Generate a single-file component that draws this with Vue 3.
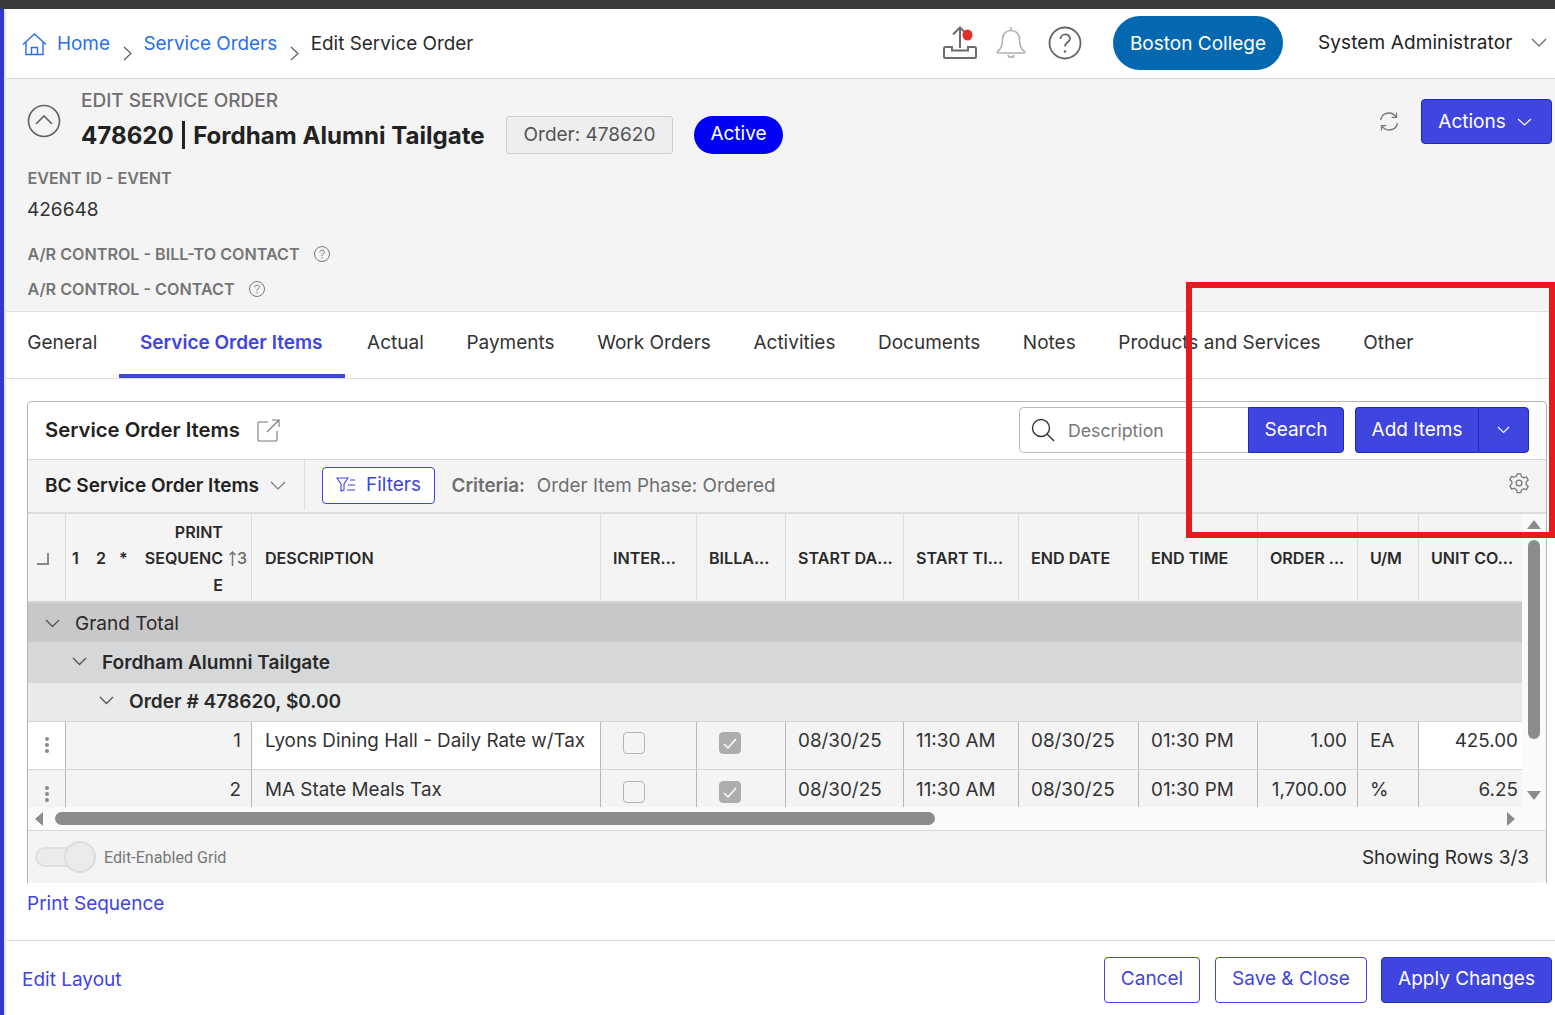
<script setup>
const tabs = ['General', 'Service Order Items', 'Actual', 'Payments', 'Work Orders', 'Activities', 'Documents', 'Notes', 'Products and Services', 'Other']

const headers = ['INTER...', 'BILLA...', 'START DA...', 'START TI...', 'END DATE', 'END TIME', 'ORDER ...', 'U/M', 'UNIT CO...']

const rows = [
  { seq: 1, desc: 'Lyons Dining Hall - Daily Rate w/Tax', start: '08/30/25', startTime: '11:30 AM', end: '08/30/25', endTime: '01:30 PM', qty: '1.00', um: 'EA', cost: '425.00' },
  { seq: 2, desc: 'MA State Meals Tax', start: '08/30/25', startTime: '11:30 AM', end: '08/30/25', endTime: '01:30 PM', qty: '1,700.00', um: '%', cost: '6.25' },
]
</script>

<template>
  <div class="page">
    <div class="topstrip"></div>
    <div class="shell">
      <header class="appbar">
        <nav class="crumbs">
          <svg class="home" width="25" height="23" viewBox="0 0 25 23" fill="none" stroke="#2b6fe8" stroke-width="1.4"><path d="M1 11.5 12.5 1 24 11.5M4 9v12.5h17V9M9.500 21.500v-7h6v7"/></svg>
          <a class="crumb-link">Home</a>
          <svg class="crumb-sep" width="9" height="15" viewBox="0 0 9 15" fill="none" stroke="#555" stroke-width="1.1"><path d="m1 1 7 6.500-7 6.500"/></svg>
          <a class="crumb-link">Service Orders</a>
          <svg class="crumb-sep" width="9" height="15" viewBox="0 0 9 15" fill="none" stroke="#555" stroke-width="1.1"><path d="m1 1 7 6.500-7 6.500"/></svg>
          <span class="crumb-cur">Edit Service Order</span>
        </nav>
        <div class="appbar-right">
          <svg class="ico-upload" width="34" height="33" viewBox="0 0 34 33" fill="none" stroke="#6d6d6d" stroke-width="2"><path d="M17 22V2M10 8.500 17 1.500l6 6M9 21H2.500A1.500 1.500 0 0 0 1 22.500v8A1.500 1.500 0 0 0 2.500 32h29a1.500 1.500 0 0 0 1.500-1.500v-8a1.500 1.500 0 0 0-1.500-1.500H25v3.500H9z"/><ellipse cx="24.500" cy="9" rx="5" ry="5.500" fill="#e0302a" stroke="none"/></svg>
          <svg class="ico-bell" width="30" height="33" viewBox="0 0 30 33" fill="none" stroke="#b3b3b3" stroke-width="1.600"><path d="M15 1v3.500M15 4.500c-5.500 0-8.500 4-8.500 9 0 6-1 9-4.500 11.500-1.300 1-1 2 .5 2h25c1.500 0 1.800-1 .5-2-3.500-2.500-4.500-5.500-4.500-11.500 0-5-3-9-8.500-9zM12 29c.5 3 5.500 3 6 0"/></svg>
          <svg class="ico-help" width="34" height="34" viewBox="0 0 34 34" fill="none" stroke="#666" stroke-width="1.800"><circle cx="17" cy="17" r="15.500"/><path d="M12.500 13c0-6 9.500-6 9.500-.5 0 3.800-5 3.800-5 8"/><circle cx="17" cy="25.500" r="1.200" fill="#666" stroke="none"/></svg>
          <div class="org-pill">Boston College</div>
          <div class="user">System Administrator</div>
          <svg class="user-caret" width="16" height="9" viewBox="0 0 16 9" fill="none" stroke="#666" stroke-width="1.200"><path d="m1 1 7 7 7-7"/></svg>
        </div>
      </header>

      <section class="order-head">
        <div class="order-top">
          <svg class="collapse" width="34" height="34" viewBox="0 0 34 34" fill="none" stroke="#666" stroke-width="1.700"><circle cx="17" cy="17" r="15.500"/><path d="m9 20 8-8 8 8"/></svg>
          <div class="order-titles">
            <div class="eyebrow">EDIT SERVICE ORDER</div>
            <div class="title-row">
              <h1>478620 <span class="pipe"></span> Fordham Alumni Tailgate</h1>
              <div class="badge-order">Order: 478620</div>
              <div class="badge-active">Active</div>
            </div>
          </div>
          <svg class="refresh" width="20" height="21" viewBox="0 0 20 21" fill="none" stroke="#777" stroke-width="1.300"><path d="M1.500 9C2.500 4.500 6 2 10 2c3 0 5.500 1.500 7 4M17.500 1.500V6.300h-4.800M18.500 12c-1 4.500-4.500 7-8.500 7-3 0-5.500-1.500-7-4M2.500 19.500v-4.800h4.800"/></svg>
          <button class="btn primary actions">Actions
            <svg width="15" height="8" viewBox="0 0 15 8" fill="none" stroke="#fff" stroke-width="1.200"><path d="m1 1 6.500 6L14 1"/></svg>
          </button>
        </div>
        <div class="field-label field-event">EVENT ID - EVENT</div>
        <div class="field-value">426648</div>
        <div class="field-label field-bill">A/R CONTROL - BILL-TO CONTACT
          <svg width="16" height="16" viewBox="0 0 16 16" fill="none" stroke="#777" stroke-width="1"><circle cx="8" cy="8" r="7.500"/><path d="M5.800 6.300c0-2.800 4.500-2.800 4.500-.1 0 1.800-2.300 1.700-2.300 3.700"/><circle cx="8" cy="11.800" r=".7" fill="#777" stroke="none"/></svg>
        </div>
        <div class="field-label field-contact">A/R CONTROL - CONTACT
          <svg width="16" height="16" viewBox="0 0 16 16" fill="none" stroke="#777" stroke-width="1"><circle cx="8" cy="8" r="7.500"/><path d="M5.800 6.300c0-2.800 4.500-2.800 4.500-.1 0 1.800-2.300 1.700-2.300 3.700"/><circle cx="8" cy="11.800" r=".7" fill="#777" stroke="none"/></svg>
        </div>
      </section>

      <div class="tabs">
        <div v-for="t in tabs" :key="t" class="tab" :class="{ active: t === 'Service Order Items' }">{{ t }}</div>
      </div>

      <section class="panel">
        <div class="panel-head">
          <h2>Service Order Items</h2>
          <svg class="ext" width="23" height="23" viewBox="0 0 23 23" fill="none" stroke="#777" stroke-width="1.100"><path d="M11 3H2a1.500 1.500 0 0 0-1 1v17a1 1 0 0 0 1 1h17a1 1 0 0 0 1-1v-9M10 13 22 1M15 1h7v7"/></svg>
          <div class="search">
            <svg width="24" height="24" viewBox="0 0 24 24" fill="none" stroke="#333" stroke-width="1.400"><circle cx="10" cy="10" r="8.500"/><path d="m16 16 7 7"/></svg>
            <span>Description</span>
          </div>
          <button class="btn primary search-btn">Search</button>
          <div class="split">
            <button class="btn primary split-main">Add Items</button>
            <button class="btn primary split-caret">
              <svg width="13" height="8" viewBox="0 0 13 8" fill="none" stroke="#fff" stroke-width="1.100"><path d="m1 1 5.500 5.500L12 1"/></svg>
            </button>
          </div>
        </div>

        <div class="toolbar">
          <div class="view-name">BC Service Order Items
            <svg width="16" height="9" viewBox="0 0 16 9" fill="none" stroke="#777" stroke-width="1.100"><path d="m1 1 7 7 7-7"/></svg>
          </div>
          <button class="filters">
            <svg width="20" height="15" viewBox="0 0 20 15" fill="none" stroke="#3f43e0" stroke-width="1.100"><path d="M1 1h11L8 7v6l-3 1V7zM14 3h5M12 8h7M11 13h8"/></svg>
            Filters
          </button>
          <div class="criteria"><b>Criteria:</b> Order Item Phase: Ordered</div>
          <svg class="gear" width="22" height="22" viewBox="0 0 24 24" fill="none" stroke="#777" stroke-width="1.400" stroke-linejoin="round"><circle cx="12" cy="12" r="3.200"/><path d="M10 2h4l.7 3 2.300 1.300 3-.9 2 3.400-2.200 2.200v2.600l2.200 2.200-2 3.400-3-.9-2.300 1.300-.7 3h-4l-.7-3L7 17.700l-3 .9-2-3.400 2.200-2.200v-2.600L2 8.200l2-3.400 3 .9 2.300-1.300z"/></svg>
        </div>

        <div class="grid-area">
          <div class="grid-main">
            <div class="grid-row head-row">
              <div class="cell"><span class="select-all"></span></div>
              <div class="cell seq-head">
                <span class="n1">1</span><span class="n2">2</span><span class="n3">*</span>
                <span class="seq-label">PRINT SEQUENCE</span>
                <span class="sort">
                  <svg width="7" height="15" viewBox="0 0 7 15" fill="none" stroke="#777" stroke-width="1.500"><path d="M3.500 15V1M.5 4l3-3 3 3"/></svg>
                  3
                </span>
              </div>
              <div class="cell pad desc">DESCRIPTION</div>
              <div v-for="h in headers" :key="h" class="cell pad">{{ h }}</div>
            </div>

            <div class="group g0">
              <svg width="15" height="9" viewBox="0 0 15 9" fill="none" stroke="#555" stroke-width="1.400"><path d="m1 1 6.500 6.500L14 1"/></svg>
              Grand Total
            </div>
            <div class="group g1">
              <svg width="15" height="9" viewBox="0 0 15 9" fill="none" stroke="#555" stroke-width="1.400"><path d="m1 1 6.500 6.500L14 1"/></svg>
              Fordham Alumni Tailgate
            </div>
            <div class="group g2">
              <svg width="15" height="9" viewBox="0 0 15 9" fill="none" stroke="#555" stroke-width="1.400"><path d="m1 1 6.500 6.500L14 1"/></svg>
              Order # 478620, $0.00
            </div>

            <div v-for="(r, i) in rows" :key="r.seq" class="grid-row data-row" :class="{ first: i === 0 }">
              <div class="cell kebab"><i></i><i></i><i></i></div>
              <div class="cell num">{{ r.seq }}</div>
              <div class="cell pad desc">{{ r.desc }}</div>
              <div class="cell chk"><span class="box"></span></div>
              <div class="cell chk">
                <span class="box on">
                  <svg width="16" height="13" viewBox="0 0 16 13" fill="none" stroke="#fff" stroke-width="1.500"><path d="m2 7 4 4 8-9"/></svg>
                </span>
              </div>
              <div class="cell pad">{{ r.start }}</div>
              <div class="cell pad">{{ r.startTime }}</div>
              <div class="cell pad">{{ r.end }}</div>
              <div class="cell pad">{{ r.endTime }}</div>
              <div class="cell num">{{ r.qty }}</div>
              <div class="cell pad um">{{ r.um }}</div>
              <div class="cell num cost">{{ r.cost }}</div>
            </div>
          </div>
          <div class="vscroll">
            <span class="arrow-up"></span>
            <span class="vthumb"></span>
            <span class="arrow-down"></span>
          </div>
        </div>

        <div class="hscroll">
          <span class="arrow-left"></span>
          <span class="hthumb"></span>
          <span class="arrow-right"></span>
        </div>

        <div class="panel-foot">
          <span class="toggle"><span class="knob"></span></span>
          <span class="toggle-label">Edit-Enabled Grid</span>
          <span class="row-count">Showing Rows 3/3</span>
        </div>
      </section>

      <a class="print-link">Print Sequence</a>

      <footer class="bottom">
        <a class="edit-layout">Edit Layout</a>
        <button class="btn outline cancel">Cancel</button>
        <button class="btn outline save">Save &amp; Close</button>
        <button class="btn primary apply">Apply Changes</button>
      </footer>
    </div>

    <div class="annotation"></div>
  </div>
</template>

<style>
html,
body {
  margin: 0;
  background: #fff;
}
</style>

<style scoped>
.page {
  position: relative;
  width: 1555px;
  height: 1015px;
  overflow: hidden;
  font-family: Inter, "Liberation Sans", sans-serif;
  font-size: 19px;
  color: #2a2a2a;
  background: #fff;
}

.topstrip {
  height: 9px;
  background: #3a3a3a;
}

.shell {
  height: 1006px;
  display: flex;
  flex-direction: column;
  border-left: 4px solid #3535d0;
  box-shadow: inset 2px 0 0 #dfe6f2;
  padding-left: 2px;
  box-sizing: border-box;
}

.appbar {
  height: 70px;
  flex: none;
  box-sizing: border-box;
  border-bottom: 1px solid #d8d8d8;
  display: flex;
  align-items: center;
  justify-content: space-between;
  padding-left: 16px;
}

.crumbs {
  display: flex;
  align-items: center;
  margin-top: 1px;
  font-size: 18.9px;
}

.crumbs a,
.crumb-cur {
  line-height: 24px;
}

.crumb-link {
  color: #2b6fe8;
}

.home {
  margin-right: 10px;
}

.crumb-sep {
  margin: 19px 11.5px 0 13px;
}

.crumb-cur {
  color: #2a2a2a;
}

.appbar-right {
  display: flex;
  align-items: center;
  width: 615px;
  padding-bottom: 2px;
}

.ico-upload {
  margin-left: 3px;
}

.ico-bell {
  margin-left: 19px;
}

.ico-help {
  margin-left: 22px;
}

.org-pill {
  margin-left: 31px;
  width: 170px;
  height: 54px;
  box-sizing: border-box;
  padding-top: 2px;
  border-radius: 27px;
  background: #0468b1;
  color: #fff;
  display: flex;
  align-items: center;
  justify-content: center;
}

.user {
  margin-left: 35px;
  color: #222;
  letter-spacing: 0.1px;
}

.user-caret {
  margin-left: 19px;
}

.order-head {
  height: 233px;
  flex: none;
  box-sizing: border-box;
  background: #f4f4f4;
  border-bottom: 1px solid #e2e2e2;
  padding: 0 3px 0 21px;
}

.order-top {
  display: flex;
  align-items: flex-start;
  height: 87px;
}

.collapse {
  margin-top: 25px;
  flex: none;
}

.order-titles {
  margin-left: 20px;
  flex: 1;
}

.eyebrow {
  margin-top: 10px;
  color: #6f6f6f;
  font-weight: 500;
  line-height: 24px;
}

.title-row {
  display: flex;
  align-items: center;
  margin-top: 3px;
}

h1 {
  margin: 0;
  padding-top: 1px;
  font-size: 24.1px;
  font-weight: 700;
  color: #222;
  line-height: 37px;
  width: 425px;
  white-space: nowrap;
}

.pipe {
  display: inline-block;
  width: 3px;
  height: 28px;
  margin: 0 2.5px;
  background: #2b211c;
  vertical-align: -5px;
}

.badge-order {
  width: 167px;
  height: 38px;
  box-sizing: border-box;
  border: 1px solid #cfcfcf;
  border-radius: 3px;
  background: #eee;
  color: #555;
  display: flex;
  align-items: center;
  justify-content: center;
  padding-bottom: 1px;
}

.badge-active {
  margin-left: 21px;
  width: 89px;
  height: 38px;
  box-sizing: border-box;
  border-radius: 19px;
  background: #0000f5;
  color: #fff;
  display: flex;
  align-items: center;
  justify-content: center;
  padding-bottom: 3px;
}

.refresh {
  margin-top: 32px;
  margin-right: 22px;
  flex: none;
}

.btn {
  font: inherit;
  box-sizing: border-box;
  border-radius: 4px;
  cursor: pointer;
  display: flex;
  align-items: center;
  justify-content: center;
  padding: 0;
}

.primary {
  background: #4045e0;
  border: 1px solid #1c2bb5;
  color: #fff;
}

.outline {
  background: #fff;
  border: 1px solid #4045e0;
  color: #4045e0;
}

.actions {
  width: 131px;
  height: 45px;
  margin-top: 20px;
  gap: 11px;
  padding-right: 3px;
  flex: none;
}

.field-label {
  font-size: 16.15px;
  font-weight: 600;
  color: #757575;
  line-height: 24px;
  display: flex;
  align-items: center;
  padding-left: 0.5px;
}

.field-label svg {
  margin-left: 14px;
}

.field-value {
  margin-top: 8px;
  line-height: 24px;
  color: #333;
}

.field-bill {
  margin-top: 20px;
}

.field-contact {
  margin-top: 11px;
}

.tabs {
  height: 67px;
  flex: none;
  box-sizing: border-box;
  border-bottom: 1px solid #dcdcdc;
  display: flex;
}

.tab {
  padding: 0 21.3px;
  line-height: 61px;
  height: 66px;
  box-sizing: border-box;
  color: #333;
  white-space: nowrap;
}

.tab.active {
  color: #4045e0;
  font-weight: 600;
  padding-right: 22.3px;
  margin-right: 1px;
  border-bottom: 4px solid #4045e0;
}

.panel {
  margin: 22px 8px 0 21px;
  height: 482px;
  flex: none;
  box-sizing: border-box;
  border: 1px solid #b4b4b4;
  border-bottom: none;
  border-radius: 5px 5px 0 0;
  display: flex;
  flex-direction: column;
}

.panel-head {
  height: 58px;
  flex: none;
  box-sizing: border-box;
  border-bottom: 1px solid #d8d8d8;
  display: flex;
  align-items: center;
  padding: 0 17px 1px 17px;
}

h2 {
  margin: 0;
  padding-bottom: 1px;
  font-size: 20.300px;
  font-weight: 600;
  color: #222;
}

.ext {
  margin-left: 17px;
  margin-right: auto;
}

.search {
  width: 229px;
  height: 46px;
  box-sizing: border-box;
  border: 1px solid #bbb;
  border-right: none;
  border-radius: 5px 0 0 5px;
  display: flex;
  align-items: center;
  gap: 13px;
  padding-left: 11px;
  color: #777;
  font-size: 17.700px;
}

.search-btn {
  width: 96px;
  height: 46px;
  border-radius: 0 4px 4px 0;
  padding-bottom: 1px;
}

.split {
  display: flex;
  margin-left: 11px;
}

.split-main {
  width: 123px;
  height: 46px;
  border-radius: 4px 0 0 4px;
  border-right: none;
  padding-bottom: 1px;
}

.split-caret {
  width: 51px;
  height: 46px;
  border-radius: 0 4px 4px 0;
}

.toolbar {
  height: 54px;
  flex: none;
  box-sizing: border-box;
  background: #f4f4f4;
  border-bottom: 2px solid #dcdcdc;
  display: flex;
  align-items: center;
  padding: 0 0 2px 17px;
}

.view-name {
  font-weight: 600;
  font-size: 19px;
  color: #222;
  display: flex;
  align-items: center;
  gap: 11px;
  height: 50px;
  width: 260px;
  box-sizing: border-box;
  border-right: 1px solid #dcdcdc;
}

.filters {
  font: inherit;
  margin-left: 17px;
  width: 113px;
  height: 37px;
  box-sizing: border-box;
  border: 1px solid #4045e0;
  border-radius: 4px;
  background: #fff;
  color: #4045e0;
  display: flex;
  align-items: center;
  justify-content: center;
  gap: 10px;
  padding: 0 0 1px;
}

.criteria {
  margin-left: 16.5px;
  color: #6f6f6f;
  font-size: 18.85px;
}

.criteria b {
  font-weight: 600;
  margin-right: 6.5px;
}

.gear {
  margin-left: auto;
  margin-right: 16px;
  margin-top: -4px;
}

.grid-area {
  height: 293px;
  flex: none;
  display: flex;
  overflow: hidden;
}

.grid-main {
  width: 1494px;
  flex: none;
}

.grid-row {
  display: grid;
  grid-template-columns: 38px 186px 349px 96px 89px 118px 115px 120px 119px 100px 61px 103px;
}

.head-row {
  height: 89px;
  box-sizing: border-box;
  background: #f4f4f4;
  border-bottom: 2px solid #d4d4d4;
  font-size: 16.100px;
  font-weight: 600;
  color: #2a2a2a;
}

.head-row .cell {
  border-right: 1px solid #dcdcdc;
  display: flex;
  align-items: center;
  white-space: nowrap;
  padding-top: 1px;
  box-sizing: border-box;
}

.head-row .cell:last-child {
  border-right: none;
}

.pad {
  padding-left: 12px;
}

.pad.desc {
  padding-left: 13px;
}

.select-all {
  width: 12px;
  height: 12px;
  margin-left: 9px;
  margin-top: 2px;
  border-right: 2px solid #888;
  border-bottom: 2px solid #888;
  box-sizing: border-box;
}

.seq-head {
  padding-left: 6px;
}

.n1 {
  width: 24px;
}

.n2 {
  width: 23px;
}

.n3 {
  width: 21px;
}

.seq-label {
  width: 83px;
  padding-top: 1px;
  white-space: normal;
  overflow-wrap: anywhere;
  text-align: right;
  line-height: 26.500px;
}

.sort {
  margin-left: 6px;
  font-size: 16px;
  font-weight: 500;
  color: #666;
  display: flex;
  align-items: center;
  gap: 1px;
}

.group {
  display: flex;
  align-items: center;
  font-weight: 600;
  font-size: 19.1px;
  color: #2a2a2a;
  white-space: nowrap;
  box-sizing: border-box;
}

.group svg {
  margin-right: 15px;
}

.g0 {
  height: 39px;
  background: #c8c8c8;
  padding: 2px 0 0 17px;
  font-size: 19px;
  font-weight: 400;
}

.g1 {
  height: 41px;
  background: #d6d7d9;
  padding: 0 0 2px 44px;
}

.g2 {
  height: 38px;
  background: #e9ebeb;
  padding: 0 0 3px 71px;
}

.data-row {
  height: 48px;
  box-sizing: border-box;
  background: #f4f4f4;
  border-top: 1px solid #d4d4d4;
  color: #333;
  font-size: 18.850px;
}

.data-row .cell {
  border-right: 1px solid #b8b8b8;
  padding-top: 6px;
  line-height: 26px;
  white-space: nowrap;
  box-sizing: border-box;
}

.data-row:not(.first) .cell {
  padding-top: 7px;
}

.data-row .cell:last-child {
  border-right: none;
}

.data-row.first .kebab,
.data-row.first .desc,
.data-row.first .cost {
  background: #fff;
}

.data-row .kebab {
  display: flex;
  flex-direction: column;
  align-items: center;
  gap: 2px;
  padding-top: 15px;
}

.data-row:not(.first) .kebab {
  padding-top: 16px;
}

.kebab i {
  width: 4px;
  height: 4px;
  border-radius: 50%;
  background: #8a8a8a;
}

.num {
  text-align: right;
  padding-right: 10px;
}

.cost {
  padding-right: 4px;
}

.data-row .chk {
  display: flex;
  justify-content: flex-start;
  padding: 10px 0 0 22px;
}

.data-row:not(.first) .chk {
  padding-top: 11px;
}

.box {
  width: 22px;
  height: 22px;
  box-sizing: border-box;
  border: 1px solid #b5b5b5;
  border-radius: 4px;
  display: flex;
  align-items: center;
  justify-content: center;
}

.box.on {
  background: #adadad;
  border-color: #adadad;
}

.vscroll {
  flex: 1;
  background: #fafafa;
  display: flex;
  flex-direction: column;
  align-items: center;
}

.arrow-up {
  margin-top: 6px;
  width: 0;
  height: 0;
  border-left: 7.500px solid transparent;
  border-right: 7.500px solid transparent;
  border-bottom: 9px solid #8c8c8c;
}

.vthumb {
  margin-top: 11px;
  width: 12px;
  height: 199px;
  border-radius: 6px;
  background: #8c8c8c;
}

.arrow-down {
  margin-top: 52px;
  width: 0;
  height: 0;
  border-left: 7.500px solid transparent;
  border-right: 7.500px solid transparent;
  border-top: 9px solid #8c8c8c;
}

.hscroll {
  height: 24px;
  flex: none;
  box-sizing: border-box;
  background: #fafafa;
  border-bottom: 1px solid #d8d8d8;
  display: flex;
  align-items: center;
  padding-left: 7px;
}

.arrow-left {
  width: 0;
  height: 0;
  border-top: 7.500px solid transparent;
  border-bottom: 7.500px solid transparent;
  border-right: 8px solid #8c8c8c;
}

.hthumb {
  margin-left: 12px;
  width: 880px;
  height: 13px;
  border-radius: 7px;
  background: #8c8c8c;
}

.arrow-right {
  margin-left: 572px;
  width: 0;
  height: 0;
  border-top: 7.500px solid transparent;
  border-bottom: 7.500px solid transparent;
  border-left: 8px solid #8c8c8c;
}

.panel-foot {
  flex: 1;
  background: #f4f4f4;
  border-radius: 0 0 5px 5px;
  display: flex;
  align-items: center;
  padding: 0 17px 0 7px;
}

.toggle {
  position: relative;
  width: 61px;
  height: 20px;
  box-sizing: border-box;
  border: 2px solid #e0e0e0;
  border-radius: 10px;
  background: #ebebeb;
}

.knob {
  position: absolute;
  right: -2px;
  top: -8px;
  width: 32px;
  height: 32px;
  box-sizing: border-box;
  border: 2px solid #dcdcdc;
  border-radius: 50%;
  background: #ebebeb;
}

.toggle-label {
  margin-left: 8px;
  font-family: Roboto, "Liberation Sans", sans-serif;
  font-size: 16.100px;
  color: #777;
}

.row-count {
  margin-left: auto;
  color: #2a2a2a;
}

.print-link {
  margin-left: 21px;
  margin-top: 9px;
  line-height: 24px;
  color: #4045e0;
}

.bottom {
  margin-top: auto;
  height: 75px;
  flex: none;
  box-sizing: border-box;
  border-top: 1px solid #dedede;
  display: flex;
  align-items: center;
  padding: 0 3px 0 16px;
}

.edit-layout {
  color: #4045e0;
  margin-right: auto;
  margin-top: 2px;
}

.bottom .btn {
  height: 46px;
  margin-top: 4px;
  padding-bottom: 3px;
}

.cancel {
  width: 96px;
}

.save {
  width: 152px;
  margin-left: 15px;
}

.apply {
  width: 171px;
  margin-left: 14px;
}

/* red markup drawn over the screenshot */
.annotation {
  position: absolute;
  left: 1186px;
  top: 282px;
  width: 369px;
  height: 256px;
  box-sizing: border-box;
  border: 6px solid #e8191f;
}
</style>
